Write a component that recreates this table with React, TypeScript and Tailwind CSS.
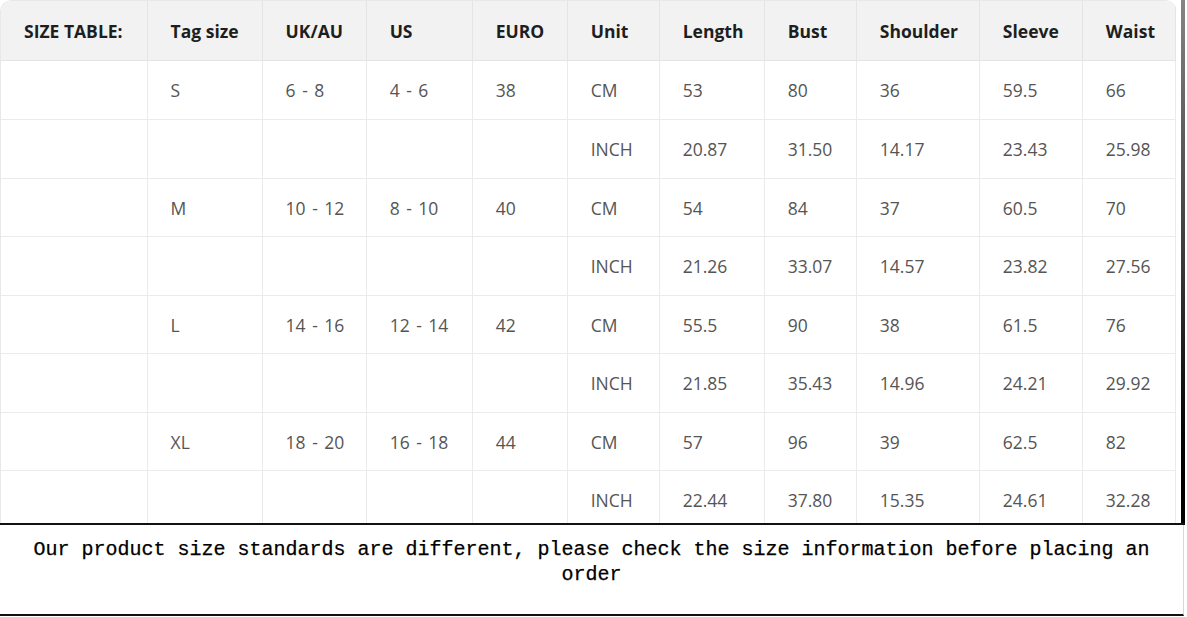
import React from "react";

const cols = [146, 115, 104, 106, 95, 92, 105, 92, 123, 103, 93];
const header = ["SIZE TABLE:", "Tag size", "UK/AU", "US", "EURO", "Unit", "Length", "Bust", "Shoulder", "Sleeve", "Waist"];
const sizes = [
  { tag: "S", uk: "6 - 8", us: "4 - 6", eu: "38", cm: ["53", "80", "36", "59.5", "66"], inch: ["20.87", "31.50", "14.17", "23.43", "25.98"] },
  { tag: "M", uk: "10 - 12", us: "8 - 10", eu: "40", cm: ["54", "84", "37", "60.5", "70"], inch: ["21.26", "33.07", "14.57", "23.82", "27.56"] },
  { tag: "L", uk: "14 - 16", us: "12 - 14", eu: "42", cm: ["55.5", "90", "38", "61.5", "76"], inch: ["21.85", "35.43", "14.96", "24.21", "29.92"] },
  { tag: "XL", uk: "18 - 20", us: "16 - 18", eu: "44", cm: ["57", "96", "39", "62.5", "82"], inch: ["22.44", "37.80", "15.35", "24.61", "32.28"] },
];
const rowHeights = [59, 59, 58, 59, 58, 59, 58, 59];

export default function App() {
  const rows: string[][] = [];
  sizes.forEach((s) => {
    rows.push(["", s.tag, s.uk, s.us, s.eu, "CM", ...s.cm]);
    rows.push(["", "", "", "", "", "INCH", ...s.inch]);
  });
  return (
    <div className="w-[1187px] h-[617px] bg-white overflow-hidden relative">
      <div className="flex h-[523px] w-[1185px]">
        <div className="w-[1177px] h-[523px] overflow-hidden rounded-t-[12px] border-l border-t border-[#e8e8e8]">
          <table className="table-fixed border-collapse" style={{ width: 1175, fontFamily: "'Open Sans', sans-serif" }}>
            <colgroup>
              {cols.map((w, i) => (
                <col key={i} style={{ width: w }} />
              ))}
            </colgroup>
            <thead>
              <tr className="h-[59px] bg-[#f2f2f2]">
                {header.map((h, i) => (
                  <th
                    key={i}
                    className="text-left pl-[23px] pt-[2px] text-[17.5px] font-bold text-[#1e1e1e] border-r border-b border-[#e4e4e4] whitespace-nowrap"
                  >
                    {h}
                  </th>
                ))}
              </tr>
            </thead>
            <tbody>
              {rows.map((r, ri) => (
                <tr key={ri} style={{ height: rowHeights[ri] }}>
                  {r.map((c, ci) => (
                    <td
                      key={ci}
                      className="text-left pl-[23px] pt-[2px] text-[17.5px] [word-spacing:2px] text-[#555555] border-r border-b border-[#ebebeb] whitespace-pre"
                    >
                      {c}
                    </td>
                  ))}
                </tr>
              ))}
            </tbody>
          </table>
        </div>
        <div className="w-[4px]" />
        <div className="w-[4px] h-[523px] bg-gradient-to-b from-[#858585] via-[#3a3a3a] to-[#000000]" />
      </div>
      <div className="w-[1185px] h-[2px] bg-[#111111]" />
      <div
        className="w-[1184px] h-[91px] border-r border-[#d8d8d8] border-b-2 border-b-[#111111] pt-[12px] px-[2px] text-center text-[20px] leading-[25px] text-black [-webkit-text-stroke:0.25px_#000]"
        style={{ fontFamily: "'Liberation Mono', 'DejaVu Sans Mono', monospace" }}
      >
        Our product size standards are different, please check the size information before placing an order
      </div>
    </div>
  );
}
